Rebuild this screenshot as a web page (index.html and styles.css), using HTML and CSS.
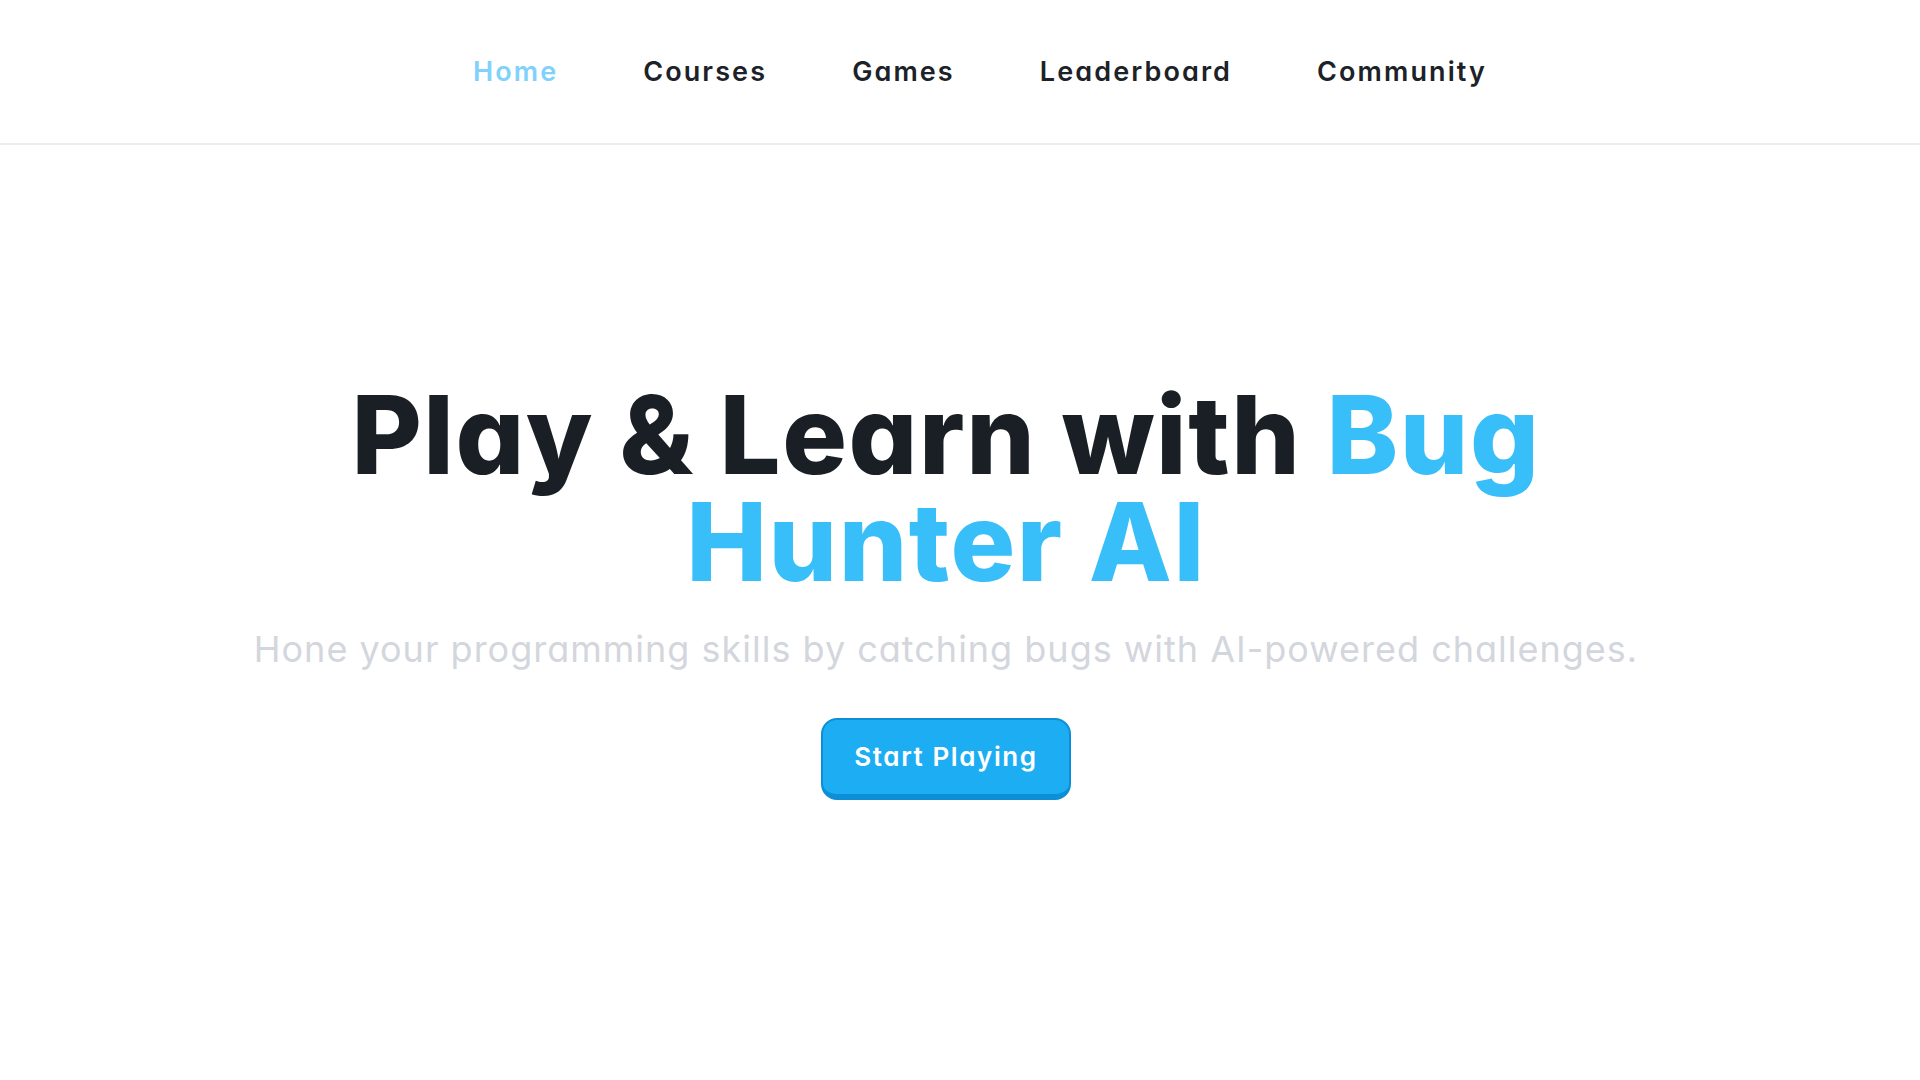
FILE: index.html
```html
<!DOCTYPE html>
<html lang="en">
<head>
<meta charset="utf-8">
<title>Bug Hunter AI</title>
<link rel="stylesheet" href="styles.css">
</head>
<body>
<header class="site-header">
  <ul class="nav">
    <li><a class="nav-link active" href="#">Home</a></li>
    <li><a class="nav-link" href="#">Courses</a></li>
    <li><a class="nav-link" href="#">Games</a></li>
    <li><a class="nav-link" href="#">Leaderboard</a></li>
    <li><a class="nav-link" href="#">Community</a></li>
  </ul>
</header>
<main class="hero">
  <h1 class="hero-title">Play &amp; Learn with <span class="accent">Bug Hunter AI</span></h1>
  <p class="hero-sub">Hone your programming skills by catching bugs with AI-powered challenges.</p>
  <a class="cta" href="#">Start Playing</a>
</main>
</body>
</html>
```

FILE: styles.css
```css
* { box-sizing: border-box; }
html, body { margin: 0; padding: 0; background: #ffffff; }
body {
  font-family: "Inter", "Noto Sans", sans-serif;
  font-feature-settings: "cv11" 1;
  color: #191f24;
}
.site-header {
  height: 145px;
  border-bottom: 2px solid #ececf2;
  display: flex;
  align-items: center;
  justify-content: center;
}
.nav {
  list-style: none;
  margin: 0;
  padding: 0 0 0 40px;
  display: flex;
  gap: 85px;
}
.nav-link {
  text-decoration: none;
  color: #1c2227;
  font-size: 27px;
  font-weight: 600;
  letter-spacing: 2.1px;
  line-height: 32px;
  display: block;
}
.nav-link.active { color: #80d2fb; }
.hero {
  display: flex;
  flex-direction: column;
  align-items: center;
  text-align: center;
  padding-top: 236px;
  padding-right: 28px;
}
.hero-title {
  margin: 0;
  max-width: 1280px;
  font-size: 108px;
  line-height: 107px;
  font-weight: 800;
  letter-spacing: 1.5px;
  color: #191f24;
}
.accent { color: #38bff9; }
.hero-sub {
  margin: 27px 0 0;
  font-size: 36px;
  line-height: 54px;
  font-weight: 400;
  letter-spacing: 1px;
  color: #d3d6dc;
}
.cta {
  margin-top: 42px;
  display: inline-block;
  text-decoration: none;
  color: #ffffff;
  background: #1cadf3;
  border: 2px solid #0c8fd6;
  border-bottom-width: 6px;
  border-radius: 16px;
  padding: 19px 31px;
  font-size: 26px;
  line-height: 36px;
  font-weight: 600;
  letter-spacing: 1.6px;
}
```
